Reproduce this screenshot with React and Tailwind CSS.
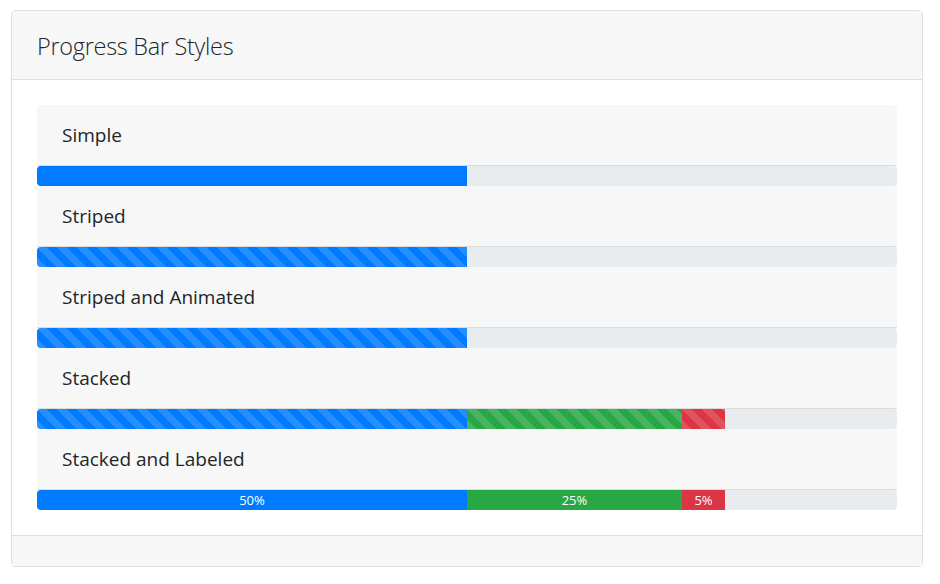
const stripe =
  'bg-[linear-gradient(45deg,rgba(255,255,255,.15)_25%,transparent_25%,transparent_50%,rgba(255,255,255,.15)_50%,rgba(255,255,255,.15)_75%,transparent_75%,transparent)] [background-size:20px_20px]'

const items = [
  { title: 'Simple', bars: [{ w: 50, color: 'bg-[#007bff]' }] },
  { title: 'Striped', bars: [{ w: 50, color: 'bg-[#007bff]', striped: true }] },
  { title: 'Striped and Animated', bars: [{ w: 50, color: 'bg-[#007bff]', striped: true }] },
  {
    title: 'Stacked',
    bars: [
      { w: 50, color: 'bg-[#007bff]', striped: true },
      { w: 25, color: 'bg-[#28a745]', striped: true },
      { w: 5, color: 'bg-[#dc3545]', striped: true },
    ],
  },
  {
    title: 'Stacked and Labeled',
    bars: [
      { w: 50, color: 'bg-[#007bff]', label: '50%' },
      { w: 25, color: 'bg-[#28a745]', label: '25%' },
      { w: 5, color: 'bg-[#dc3545]', label: '5%' },
    ],
  },
]

function Bar({ bars }) {
  return (
    <div className="flex h-[20px] overflow-hidden rounded-[4px] bg-[#e9ecef]">
      {bars.map((bar, i) => (
        <div
          key={i}
          className={`${bar.color} ${bar.striped ? stripe : ''} flex h-full items-center justify-center text-[13px] leading-none text-white`}
          style={{ width: `${bar.w}%` }}
        >
          {bar.label}
        </div>
      ))}
    </div>
  )
}

export default function App() {
  return (
    <div className="min-h-screen bg-white pt-[10px] pl-[11px] font-['Open_Sans',sans-serif] text-[#212529]">
      <div className="w-[912px] rounded-[4px] border border-[#dfdfdf]">
        <div className="flex h-[69px] items-center border-b border-[#dfdfdf] bg-[#f7f7f7] px-[25px] pt-[3px]">
          <h3 className="text-[23.5px] font-light tracking-[-0.3px]">Progress Bar Styles</h3>
        </div>
        <div className="p-[25px]">
          <div className="overflow-hidden rounded-t-[4px]">
            {items.map((item) => (
              <div key={item.title}>
                <div className="flex h-[61px] items-center border-b border-[#dcdcdc] bg-[#f7f7f7] px-[25px] text-[19px]">
                  {item.title}
                </div>
                <Bar bars={item.bars} />
              </div>
            ))}
          </div>
        </div>
        <div className="h-[31px] border-t border-[#dfdfdf] bg-[#f7f7f7]" />
      </div>
    </div>
  )
}
